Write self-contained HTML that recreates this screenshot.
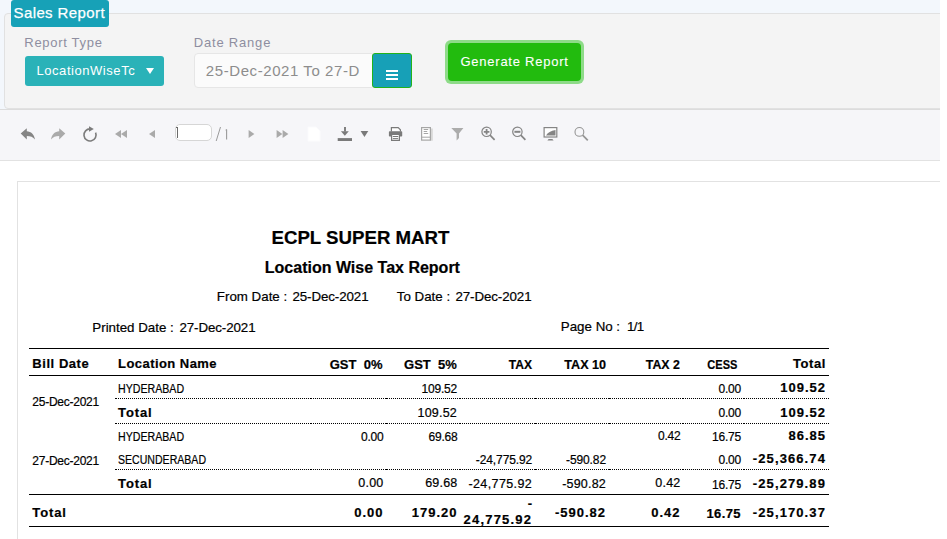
<!DOCTYPE html>
<html><head><meta charset="utf-8"><style>
*{margin:0;padding:0;box-sizing:border-box}
html,body{width:947px;height:539px;overflow:hidden;background:#fff;font-family:"Liberation Sans",sans-serif}
.a{position:absolute}
.t{position:absolute;white-space:nowrap;font-family:"Liberation Sans",sans-serif}
.k{-webkit-text-stroke:0.2px #000}
</style></head><body>
<div class="a" style="left:0;top:0;width:940px;height:109px;background:#f3f7fc"></div>
<div class="a" style="left:4px;top:13px;width:940px;height:96px;background:#f4f4f4;border:1px solid #e1e1e1;border-radius:4px"></div>
<div class="a" style="left:0;top:109px;width:940px;height:1px;background:#dcdcdc"></div>
<div class="a" style="left:0;top:110px;width:940px;height:50px;background:#f6f6f9"></div>
<div class="a" style="left:0;top:160px;width:940px;height:1px;background:#e2e2e2"></div>
<div class="a" style="left:17px;top:181px;width:930px;height:400px;border-left:1px solid #e2e2e2;border-top:1px solid #e2e2e2"></div>
<div class="a" style="left:940px;top:0;width:7px;height:539px;background:#fff"></div>
<!-- badge -->
<div class="a" style="left:11px;top:0;width:98px;height:27px;background:#17a1b7;border-radius:3px"></div>
<!-- dropdown -->
<div class="a" style="left:25px;top:56px;width:139px;height:30px;background:#2ab2b8;border-radius:3px"></div>
<div class="a" style="left:145.5px;top:68px;width:0;height:0;border-left:4.2px solid transparent;border-right:4.2px solid transparent;border-top:6.2px solid #fff"></div>
<!-- date input -->
<div class="a" style="left:194px;top:53px;width:179px;height:35px;background:#fbfbfb;border:1px solid #e6e6e6;border-radius:4px 0 0 4px"></div>
<!-- menu button -->
<div class="a" style="left:372px;top:53px;width:40px;height:35px;background:#17a0b7;border:1px solid #22b31a;border-radius:3px"></div>
<div class="a" style="left:386px;top:70px;width:12px;height:2px;background:#fff"></div>
<div class="a" style="left:386px;top:74px;width:12px;height:2px;background:#fff"></div>
<div class="a" style="left:386px;top:78px;width:12px;height:2px;background:#fff"></div>
<!-- generate -->
<div class="a" style="left:445px;top:40px;width:139px;height:44px;background:#8edb88;border-radius:6px"></div>
<div class="a" style="left:448px;top:43px;width:133px;height:38px;background:#22bb0e;border-radius:4px"></div>
<!-- toolbar icons -->
<svg class="a" style="left:20px;top:128px" width="16" height="12" viewBox="0 0 16 12"><path d="M0.7 5.6 L6.8 0.2 V3.2 C11 3.4 14.2 6.2 15 11.6 C13 8.8 10.6 7.9 6.8 7.9 V11.4 Z" fill="#858585"/></svg>
<svg class="a" style="left:50px;top:128px" width="16" height="12" viewBox="0 0 16 12"><path d="M15.3 5.6 L9.2 0.2 V3.2 C5 3.4 1.8 6.2 1 11.6 C3 8.8 5.4 7.9 9.2 7.9 V11.4 Z" fill="#aaaaaa"/></svg>
<svg class="a" style="left:80px;top:124px" width="18" height="19" viewBox="0 0 18 19"><path d="M15.6 8.6 A6.05 6.05 0 1 1 10.2 4.9" fill="none" stroke="#7c7c7c" stroke-width="1.6"/><path d="M9 2.2 L13.8 5 L9 7.8 Z" fill="#7c7c7c"/></svg>
<svg class="a" style="left:115px;top:130px" width="12" height="8" viewBox="0 0 12 8"><path d="M0 4 L6 0 V8 Z M6 4 L12 0 V8 Z" fill="#aaaaaa"/></svg>
<svg class="a" style="left:149px;top:130px" width="6" height="8" viewBox="0 0 6 8"><path d="M0 4 L6 0 V8 Z" fill="#aaaaaa"/></svg>
<div class="a" style="left:175px;top:124px;width:37px;height:17px;background:#fff;border:1px solid #d6d6d6;border-radius:5px"></div>
<div class="a" style="left:177px;top:127px;width:1.2px;height:11px;background:#6a6a6a"></div>
<div class="a" style="left:176px;top:127px;width:2px;height:1px;background:#6a6a6a"></div>
<svg class="a" style="left:215px;top:126px" width="14" height="16" viewBox="0 0 14 16"><path d="M5.5 1 L1.2 15" stroke="#9a9a9a" stroke-width="1"/><path d="M11.6 3.5 V13.5" stroke="#9a9a9a" stroke-width="1.1"/><path d="M10.6 4 L11.6 3.5" stroke="#9a9a9a" stroke-width="1"/></svg>
<svg class="a" style="left:248px;top:130px" width="7" height="8" viewBox="0 0 7 8"><path d="M0.6 0 L6.4 4 L0.6 8 Z" fill="#aaaaaa"/></svg>
<svg class="a" style="left:276px;top:130px" width="13" height="8" viewBox="0 0 13 8"><path d="M0.6 0 L6.4 4 L0.6 8 Z M6.6 0 L12.4 4 L6.6 8 Z" fill="#aaaaaa"/></svg>
<svg class="a" style="left:307px;top:126px" width="14" height="16" viewBox="0 0 14 16"><path d="M1 1 H9 L13 5 V15 H1 Z" fill="#fff" stroke="#fbfbfd" stroke-width="1"/></svg>
<svg class="a" style="left:337px;top:126px" width="16" height="16" viewBox="0 0 16 16"><path d="M8 1 V5.6" stroke="#7a7a7a" stroke-width="1.9"/><path d="M3.9 5.2 H11.8 L7.85 9.7 Z" fill="#7a7a7a"/><rect x="0.7" y="12.1" width="14.3" height="2.9" fill="#7a7a7a"/></svg>
<svg class="a" style="left:360px;top:130px" width="9" height="7" viewBox="0 0 9 7"><path d="M0.6 0.9 H8.3 L4.45 6.9 Z" fill="#7a7a7a"/></svg>
<svg class="a" style="left:388px;top:126px" width="16" height="16" viewBox="0 0 16 16"><path d="M3.4 5.4 V1.6 H10.2 L12.4 3.8 V5.4" fill="#fff" stroke="#7a7a7a" stroke-width="1.2"/><rect x="0.9" y="5.2" width="13.3" height="5.3" rx="0.8" fill="#7a7a7a"/><path d="M3.6 9 V14.4 H11.4 V9" fill="#fff" stroke="#7a7a7a" stroke-width="1.2"/><path d="M4.8 10.5 H10.2 M4.8 12.6 H10.2" stroke="#7a7a7a" stroke-width="1"/></svg>
<svg class="a" style="left:420px;top:126px" width="14" height="16" viewBox="0 0 14 16"><rect x="10.4" y="2.5" width="2.4" height="12.2" fill="#d8d8d8"/><rect x="1.6" y="1.6" width="8.8" height="12.5" fill="#fff" stroke="#a6a6a6" stroke-width="1.2"/><path d="M3.7 3.5 H8.2 M3.7 5.5 H7.2 M3.7 7.5 H8.2" stroke="#a6a6a6" stroke-width="1"/><path d="M1.6 11.2 H10.4" stroke="#a6a6a6" stroke-width="1"/></svg>
<svg class="a" style="left:451px;top:127px" width="14" height="14" viewBox="0 0 14 14"><path d="M0.3 1 H12.4 L8 6.6 V11 L5.6 13.6 V6.6 Z" fill="#acacac"/></svg>
<svg class="a" style="left:481px;top:126px" width="15" height="15" viewBox="0 0 15 15"><circle cx="5.6" cy="5.8" r="4.7" fill="none" stroke="#858585" stroke-width="1.2"/><path d="M2.8 5.8 H8.4 M5.6 3 V8.6" stroke="#858585" stroke-width="1.8"/><path d="M9 9.2 L13.6 13.9" stroke="#858585" stroke-width="1.7"/></svg>
<svg class="a" style="left:512px;top:126px" width="15" height="15" viewBox="0 0 15 15"><circle cx="5.4" cy="5.8" r="4.7" fill="none" stroke="#858585" stroke-width="1.2"/><path d="M2.4 5.8 H8.4" stroke="#858585" stroke-width="2"/><path d="M8.8 9.2 L13.4 13.9" stroke="#858585" stroke-width="1.7"/></svg>
<svg class="a" style="left:543px;top:126px" width="16" height="16" viewBox="0 0 16 16"><rect x="1.1" y="1.6" width="12.7" height="9.4" fill="#fff" stroke="#858585" stroke-width="1.2"/><path d="M3 9.6 C4.5 6.5 8 4.4 12.5 3.9 V9.6 Z" fill="#858585"/><path d="M4.4 14.6 L5.6 13 H9.4 L10.6 14.6 Z" fill="#858585"/></svg>
<svg class="a" style="left:574px;top:126px" width="15" height="15" viewBox="0 0 15 15"><circle cx="5.4" cy="5.9" r="4.4" fill="none" stroke="#969696" stroke-width="1.1"/><path d="M8.6 9.1 L13.8 14.3" stroke="#969696" stroke-width="1.7"/></svg>

<!-- table lines -->
<div class="a" style="left:29px;top:348px;width:800px;height:1px;background:#000"></div>
<div class="a" style="left:29px;top:375px;width:800px;height:1px;background:#000"></div>
<div class="a" style="left:115px;top:398px;width:2px;height:1px;background:#000"></div>
<div class="a" style="left:118px;top:398px;width:191px;height:1px;background:repeating-linear-gradient(to right,#000 0 1px,transparent 1px 2px)"></div>
<div class="a" style="left:310px;top:398px;width:2px;height:1px;background:#000"></div>
<div class="a" style="left:313px;top:398px;width:71px;height:1px;background:repeating-linear-gradient(to right,#000 0 1px,transparent 1px 2px)"></div>
<div class="a" style="left:385px;top:398px;width:3px;height:1px;background:#000"></div>
<div class="a" style="left:389px;top:398px;width:69px;height:1px;background:repeating-linear-gradient(to right,#000 0 1px,transparent 1px 2px)"></div>
<div class="a" style="left:459px;top:398px;width:2px;height:1px;background:#000"></div>
<div class="a" style="left:462px;top:398px;width:71px;height:1px;background:repeating-linear-gradient(to right,#000 0 1px,transparent 1px 2px)"></div>
<div class="a" style="left:534px;top:398px;width:3px;height:1px;background:#000"></div>
<div class="a" style="left:538px;top:398px;width:69px;height:1px;background:repeating-linear-gradient(to right,#000 0 1px,transparent 1px 2px)"></div>
<div class="a" style="left:608px;top:398px;width:3px;height:1px;background:#000"></div>
<div class="a" style="left:612px;top:398px;width:69px;height:1px;background:repeating-linear-gradient(to right,#000 0 1px,transparent 1px 2px)"></div>
<div class="a" style="left:682px;top:398px;width:2px;height:1px;background:#000"></div>
<div class="a" style="left:685px;top:398px;width:57px;height:1px;background:repeating-linear-gradient(to right,#000 0 1px,transparent 1px 2px)"></div>
<div class="a" style="left:743px;top:398px;width:2px;height:1px;background:#000"></div>
<div class="a" style="left:746px;top:398px;width:83px;height:1px;background:repeating-linear-gradient(to right,#000 0 1px,transparent 1px 2px)"></div>
<div class="a" style="left:115px;top:423px;width:2px;height:1px;background:#000"></div>
<div class="a" style="left:118px;top:423px;width:191px;height:1px;background:repeating-linear-gradient(to right,#000 0 1px,transparent 1px 2px)"></div>
<div class="a" style="left:310px;top:423px;width:2px;height:1px;background:#000"></div>
<div class="a" style="left:313px;top:423px;width:71px;height:1px;background:repeating-linear-gradient(to right,#000 0 1px,transparent 1px 2px)"></div>
<div class="a" style="left:385px;top:423px;width:3px;height:1px;background:#000"></div>
<div class="a" style="left:389px;top:423px;width:69px;height:1px;background:repeating-linear-gradient(to right,#000 0 1px,transparent 1px 2px)"></div>
<div class="a" style="left:459px;top:423px;width:2px;height:1px;background:#000"></div>
<div class="a" style="left:462px;top:423px;width:71px;height:1px;background:repeating-linear-gradient(to right,#000 0 1px,transparent 1px 2px)"></div>
<div class="a" style="left:534px;top:423px;width:3px;height:1px;background:#000"></div>
<div class="a" style="left:538px;top:423px;width:69px;height:1px;background:repeating-linear-gradient(to right,#000 0 1px,transparent 1px 2px)"></div>
<div class="a" style="left:608px;top:423px;width:3px;height:1px;background:#000"></div>
<div class="a" style="left:612px;top:423px;width:69px;height:1px;background:repeating-linear-gradient(to right,#000 0 1px,transparent 1px 2px)"></div>
<div class="a" style="left:682px;top:423px;width:2px;height:1px;background:#000"></div>
<div class="a" style="left:685px;top:423px;width:57px;height:1px;background:repeating-linear-gradient(to right,#000 0 1px,transparent 1px 2px)"></div>
<div class="a" style="left:743px;top:423px;width:2px;height:1px;background:#000"></div>
<div class="a" style="left:746px;top:423px;width:83px;height:1px;background:repeating-linear-gradient(to right,#000 0 1px,transparent 1px 2px)"></div>
<div class="a" style="left:115px;top:469px;width:2px;height:1px;background:#000"></div>
<div class="a" style="left:118px;top:469px;width:191px;height:1px;background:repeating-linear-gradient(to right,#000 0 1px,transparent 1px 2px)"></div>
<div class="a" style="left:310px;top:469px;width:2px;height:1px;background:#000"></div>
<div class="a" style="left:313px;top:469px;width:71px;height:1px;background:repeating-linear-gradient(to right,#000 0 1px,transparent 1px 2px)"></div>
<div class="a" style="left:385px;top:469px;width:3px;height:1px;background:#000"></div>
<div class="a" style="left:389px;top:469px;width:69px;height:1px;background:repeating-linear-gradient(to right,#000 0 1px,transparent 1px 2px)"></div>
<div class="a" style="left:459px;top:469px;width:2px;height:1px;background:#000"></div>
<div class="a" style="left:462px;top:469px;width:71px;height:1px;background:repeating-linear-gradient(to right,#000 0 1px,transparent 1px 2px)"></div>
<div class="a" style="left:534px;top:469px;width:3px;height:1px;background:#000"></div>
<div class="a" style="left:538px;top:469px;width:69px;height:1px;background:repeating-linear-gradient(to right,#000 0 1px,transparent 1px 2px)"></div>
<div class="a" style="left:608px;top:469px;width:3px;height:1px;background:#000"></div>
<div class="a" style="left:612px;top:469px;width:69px;height:1px;background:repeating-linear-gradient(to right,#000 0 1px,transparent 1px 2px)"></div>
<div class="a" style="left:682px;top:469px;width:2px;height:1px;background:#000"></div>
<div class="a" style="left:685px;top:469px;width:57px;height:1px;background:repeating-linear-gradient(to right,#000 0 1px,transparent 1px 2px)"></div>
<div class="a" style="left:743px;top:469px;width:2px;height:1px;background:#000"></div>
<div class="a" style="left:746px;top:469px;width:83px;height:1px;background:repeating-linear-gradient(to right,#000 0 1px,transparent 1px 2px)"></div>
<div class="a" style="left:29px;top:494px;width:800px;height:1px;background:#000"></div>
<div class="a" style="left:29px;top:526px;width:800px;height:1px;background:#000"></div>
<div class="t" style="left:13.5px;top:5.10px;font-size:15px;line-height:15px;font-weight:normal;color:#fff;letter-spacing:0.4px;-webkit-text-stroke:0.25px #fff;">Sales Report</div>
<div class="t" style="left:24.3px;top:35.70px;font-size:13px;line-height:13px;font-weight:normal;color:#8e8ea0;letter-spacing:0.7px;">Report Type</div>
<div class="t" style="left:193.8px;top:35.90px;font-size:13px;line-height:13px;font-weight:normal;color:#8e8ea0;letter-spacing:0.8px;">Date Range</div>
<div class="t" style="left:36.5px;top:64.00px;font-size:13px;line-height:13px;font-weight:normal;color:#fff;letter-spacing:0.55px;">LocationWiseTc</div>
<div class="t" style="left:205.8px;top:63.30px;font-size:15px;line-height:15px;font-weight:normal;color:#8d8d8d;letter-spacing:0.58px;">25-Dec-2021 To 27-D</div>
<div class="t" style="left:460.5px;top:54.60px;font-size:13px;line-height:13px;font-weight:normal;color:#fff;letter-spacing:0.75px;-webkit-text-stroke:0.1px #fff;">Generate Report</div>
<div class="t k" style="left:271.5px;top:228.90px;font-size:18.67px;line-height:18.67px;font-weight:bold;color:#000;letter-spacing:0px;">ECPL SUPER MART</div>
<div class="t k" style="left:264.8px;top:260.06px;font-size:16px;line-height:16px;font-weight:bold;color:#000;letter-spacing:0px;">Location Wise Tax Report</div>
<div class="t k" style="left:216.8px;top:289.92px;font-size:13.33px;line-height:13.33px;font-weight:normal;color:#000;letter-spacing:0px;">From Date :</div>
<div class="t k" style="left:292.5px;top:289.92px;font-size:13.33px;line-height:13.33px;font-weight:normal;color:#000;letter-spacing:-0.1px;">25-Dec-2021</div>
<div class="t k" style="left:396.8px;top:289.92px;font-size:13.33px;line-height:13.33px;font-weight:normal;color:#000;letter-spacing:0px;">To Date :</div>
<div class="t k" style="left:455.5px;top:289.92px;font-size:13.33px;line-height:13.33px;font-weight:normal;color:#000;letter-spacing:-0.1px;">27-Dec-2021</div>
<div class="t k" style="left:92.3px;top:320.62px;font-size:13.33px;line-height:13.33px;font-weight:normal;color:#000;letter-spacing:0px;">Printed Date :</div>
<div class="t k" style="left:179.5px;top:320.62px;font-size:13.33px;line-height:13.33px;font-weight:normal;color:#000;letter-spacing:-0.1px;">27-Dec-2021</div>
<div class="t k" style="left:560.8px;top:320.22px;font-size:13.33px;line-height:13.33px;font-weight:normal;color:#000;letter-spacing:0px;">Page No :</div>
<div class="t k" style="left:627px;top:320.22px;font-size:13.33px;line-height:13.33px;font-weight:normal;color:#000;letter-spacing:-0.7px;">1/1</div>
<div class="t k" style="left:32.3px;top:356.90px;font-size:13px;line-height:13px;font-weight:bold;color:#000;letter-spacing:0.55px;">Bill Date</div>
<div class="t k" style="left:118px;top:356.90px;font-size:13px;line-height:13px;font-weight:bold;color:#000;letter-spacing:0.45px;">Location Name</div>
<div class="t k" style="right:564.5px;top:358.00px;font-size:13px;line-height:13px;font-weight:bold;color:#000;letter-spacing:0.0px;">GST&nbsp;&nbsp;0%</div>
<div class="t k" style="right:490.2px;top:358.00px;font-size:13px;line-height:13px;font-weight:bold;color:#000;letter-spacing:0.0px;">GST&nbsp;&nbsp;5%</div>
<div class="t k" style="right:414.5px;top:357.70px;font-size:13px;line-height:13px;font-weight:bold;color:#000;letter-spacing:0px;transform:scaleX(0.93);transform-origin:100% 0;">TAX</div>
<div class="t k" style="right:341px;top:357.70px;font-size:13px;line-height:13px;font-weight:bold;color:#000;letter-spacing:0px;transform:scaleX(0.97);transform-origin:100% 0;">TAX 10</div>
<div class="t k" style="right:267px;top:357.70px;font-size:13px;line-height:13px;font-weight:bold;color:#000;letter-spacing:0px;transform:scaleX(0.95);transform-origin:100% 0;">TAX 2</div>
<div class="t k" style="right:209.39999999999998px;top:357.70px;font-size:13px;line-height:13px;font-weight:bold;color:#000;letter-spacing:0px;transform:scaleX(0.85);transform-origin:100% 0;">CESS</div>
<div class="t k" style="right:121px;top:356.50px;font-size:13px;line-height:13px;font-weight:bold;color:#000;letter-spacing:0.6px;">Total</div>
<div class="t k" style="left:118px;top:382.64px;font-size:12px;line-height:12px;font-weight:normal;color:#000;letter-spacing:0px;transform:scaleX(0.885);transform-origin:0 0;">HYDERABAD</div>
<div class="t k" style="right:490px;top:382.94px;font-size:12px;line-height:12px;font-weight:normal;color:#000;letter-spacing:-0.2px;">109.52</div>
<div class="t k" style="right:206px;top:382.64px;font-size:12px;line-height:12px;font-weight:normal;color:#000;letter-spacing:-0.2px;">0.00</div>
<div class="t k" style="right:121px;top:381.00px;font-size:13px;line-height:13px;font-weight:bold;color:#000;letter-spacing:1.0px;">109.52</div>
<div class="t k" style="left:32.3px;top:396.04px;font-size:12px;line-height:12px;font-weight:normal;color:#000;letter-spacing:-0.25px;">25-Dec-2021</div>
<div class="t k" style="left:118px;top:405.50px;font-size:13px;line-height:13px;font-weight:bold;color:#000;letter-spacing:0.9px;">Total</div>
<div class="t k" style="right:490px;top:406.62px;font-size:12.5px;line-height:12.5px;font-weight:normal;color:#000;letter-spacing:0.2px;">109.52</div>
<div class="t k" style="right:206px;top:407.24px;font-size:12px;line-height:12px;font-weight:normal;color:#000;letter-spacing:-0.2px;">0.00</div>
<div class="t k" style="right:121px;top:405.50px;font-size:13px;line-height:13px;font-weight:bold;color:#000;letter-spacing:1.0px;">109.52</div>
<div class="t k" style="left:118px;top:430.64px;font-size:12px;line-height:12px;font-weight:normal;color:#000;letter-spacing:0px;transform:scaleX(0.885);transform-origin:0 0;">HYDERABAD</div>
<div class="t k" style="right:563.5px;top:430.84px;font-size:12px;line-height:12px;font-weight:normal;color:#000;letter-spacing:-0.2px;">0.00</div>
<div class="t k" style="right:489.5px;top:430.84px;font-size:12px;line-height:12px;font-weight:normal;color:#000;letter-spacing:-0.2px;">69.68</div>
<div class="t k" style="right:266.5px;top:430.24px;font-size:12px;line-height:12px;font-weight:normal;color:#000;letter-spacing:-0.2px;">0.42</div>
<div class="t k" style="right:206px;top:430.84px;font-size:12px;line-height:12px;font-weight:normal;color:#000;letter-spacing:-0.2px;">16.75</div>
<div class="t k" style="right:121px;top:429.00px;font-size:13px;line-height:13px;font-weight:bold;color:#000;letter-spacing:1.0px;">86.85</div>
<div class="t k" style="left:32.3px;top:454.64px;font-size:12px;line-height:12px;font-weight:normal;color:#000;letter-spacing:-0.25px;">27-Dec-2021</div>
<div class="t k" style="left:118px;top:453.64px;font-size:12px;line-height:12px;font-weight:normal;color:#000;letter-spacing:0px;transform:scaleX(0.88);transform-origin:0 0;">SECUNDERABAD</div>
<div class="t k" style="right:414.79999999999995px;top:453.74px;font-size:12px;line-height:12px;font-weight:normal;color:#000;letter-spacing:-0.1px;">-24,775.92</div>
<div class="t k" style="right:341px;top:453.74px;font-size:12px;line-height:12px;font-weight:normal;color:#000;letter-spacing:-0.1px;">-590.82</div>
<div class="t k" style="right:206px;top:453.74px;font-size:12px;line-height:12px;font-weight:normal;color:#000;letter-spacing:-0.2px;">0.00</div>
<div class="t k" style="right:121px;top:451.60px;font-size:13px;line-height:13px;font-weight:bold;color:#000;letter-spacing:1.1px;">-25,366.74</div>
<div class="t k" style="left:118px;top:476.60px;font-size:13px;line-height:13px;font-weight:bold;color:#000;letter-spacing:0.9px;">Total</div>
<div class="t k" style="right:563.5px;top:477.42px;font-size:12.5px;line-height:12.5px;font-weight:normal;color:#000;letter-spacing:0.2px;">0.00</div>
<div class="t k" style="right:489.5px;top:476.82px;font-size:12.5px;line-height:12.5px;font-weight:normal;color:#000;letter-spacing:0.2px;">69.68</div>
<div class="t k" style="right:414.79999999999995px;top:477.62px;font-size:12.5px;line-height:12.5px;font-weight:normal;color:#000;letter-spacing:0.4px;">-24,775.92</div>
<div class="t k" style="right:341px;top:477.62px;font-size:12.5px;line-height:12.5px;font-weight:normal;color:#000;letter-spacing:0.2px;">-590.82</div>
<div class="t k" style="right:266.5px;top:477.02px;font-size:12.5px;line-height:12.5px;font-weight:normal;color:#000;letter-spacing:0.2px;">0.42</div>
<div class="t k" style="right:206px;top:478.54px;font-size:12px;line-height:12px;font-weight:normal;color:#000;letter-spacing:-0.2px;">16.75</div>
<div class="t k" style="right:121px;top:476.60px;font-size:13px;line-height:13px;font-weight:bold;color:#000;letter-spacing:1.1px;">-25,279.89</div>
<div class="t k" style="left:32.3px;top:505.70px;font-size:13px;line-height:13px;font-weight:bold;color:#000;letter-spacing:0.9px;">Total</div>
<div class="t k" style="right:563.5px;top:506.20px;font-size:13px;line-height:13px;font-weight:bold;color:#000;letter-spacing:1.0px;">0.00</div>
<div class="t k" style="right:489.5px;top:506.20px;font-size:13px;line-height:13px;font-weight:bold;color:#000;letter-spacing:1.0px;">179.20</div>
<div class="t k" style="right:415px;top:497.00px;font-size:13px;line-height:13px;font-weight:bold;color:#000;letter-spacing:0px;">-</div>
<div class="t k" style="right:414.79999999999995px;top:513.20px;font-size:13px;line-height:13px;font-weight:bold;color:#000;letter-spacing:1.2px;">24,775.92</div>
<div class="t k" style="right:341px;top:505.80px;font-size:13px;line-height:13px;font-weight:bold;color:#000;letter-spacing:1.0px;">-590.82</div>
<div class="t k" style="right:266.5px;top:506.10px;font-size:13px;line-height:13px;font-weight:bold;color:#000;letter-spacing:1.0px;">0.42</div>
<div class="t k" style="right:206px;top:507.00px;font-size:13px;line-height:13px;font-weight:bold;color:#000;letter-spacing:0.4px;">16.75</div>
<div class="t k" style="right:121px;top:506.10px;font-size:13px;line-height:13px;font-weight:bold;color:#000;letter-spacing:1.1px;">-25,170.37</div>
</body></html>
